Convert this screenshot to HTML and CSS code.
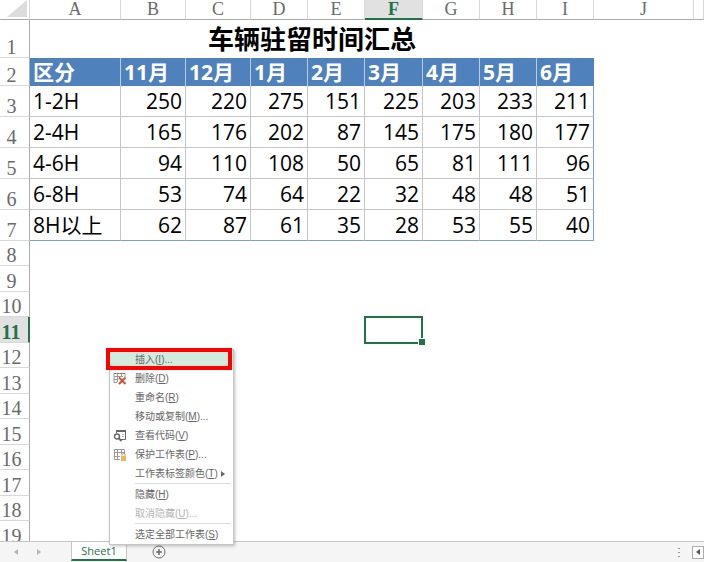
FILE: index.html
```html
<!DOCTYPE html>
<html lang="zh-CN">
<head>
    <meta charset="UTF-8">
    <meta name="viewport" content="width=device-width, initial-scale=1.0">
    <title>车辆驻留时间汇总</title>
    <link rel="stylesheet" href="styles.css">
</head>
<body>
    <main class="grid-area">
        <table class="sheet">
            <colgroup>
                <col class="col-gutter">
                <col class="col-a">
                <col class="col-wide"><col class="col-wide">
                <col class="col-month"><col class="col-month"><col class="col-active">
                <col class="col-month"><col class="col-month"><col class="col-month">
                <col class="col-j">
                <col>
            </colgroup>
            <thead>
                <tr>
                    <th class="corner"><svg width="20" height="17" viewBox="0 0 20 17"><path d="M20 0v17H0z" fill="#dcdcdc"/></svg></th>
                    <th>A</th><th>B</th><th>C</th><th>D</th><th>E</th><th class="active">F</th><th>G</th><th>H</th><th>I</th><th>J</th><th></th>
                </tr>
            </thead>
            <tbody>
                <tr class="title-row"><th>1</th><td class="title" colspan="9">车辆驻留时间汇总</td><td></td><td></td></tr>
                <tr class="head-row"><th>2</th><td>区分</td><td>11月</td><td>12月</td><td>1月</td><td>2月</td><td>3月</td><td>4月</td><td>5月</td><td>6月</td></tr>
                <tr class="data-row"><th>3</th><td>1-2H</td><td>250</td><td>220</td><td>275</td><td>151</td><td>225</td><td>203</td><td>233</td><td>211</td></tr>
                <tr class="data-row"><th>4</th><td>2-4H</td><td>165</td><td>176</td><td>202</td><td>87</td><td>145</td><td>175</td><td>180</td><td>177</td></tr>
                <tr class="data-row"><th>5</th><td>4-6H</td><td>94</td><td>110</td><td>108</td><td>50</td><td>65</td><td>81</td><td>111</td><td>96</td></tr>
                <tr class="data-row"><th>6</th><td>6-8H</td><td>53</td><td>74</td><td>64</td><td>22</td><td>32</td><td>48</td><td>48</td><td>51</td></tr>
                <tr class="data-row last"><th>7</th><td>8H以上</td><td>62</td><td>87</td><td>61</td><td>35</td><td>28</td><td>53</td><td>55</td><td>40</td></tr>
                <tr class="short"><th>8</th></tr>
                <tr><th>9</th></tr>
                <tr class="short"><th>10</th></tr>
                <tr><th class="active">11</th><td colspan="5"></td><td class="selected"></td></tr>
                <tr class="short"><th>12</th></tr>
                <tr><th>13</th></tr>
                <tr class="short"><th>14</th></tr>
                <tr><th>15</th></tr>
                <tr class="short"><th>16</th></tr>
                <tr><th>17</th></tr>
                <tr class="short"><th>18</th></tr>
                <tr><th>19</th></tr>
            </tbody>
        </table>
    </main>

    <footer class="tab-bar">
        <button class="nav" aria-label="上一个"><svg width="4" height="6" viewBox="0 0 4 6"><path d="M4 0v6L0 3z" fill="#b5b5b5"/></svg></button>
        <button class="nav" aria-label="下一个"><svg width="4" height="6" viewBox="0 0 4 6"><path d="M0 0v6l4-3z" fill="#b5b5b5"/></svg></button>
        <button class="tab">Sheet1</button>
        <button class="add" aria-label="新工作表"><svg width="14" height="14" viewBox="0 0 14 14" fill="none" stroke="#6a6a6a"><circle cx="7" cy="7" r="6"/><path d="M7 4v6M4 7h6" stroke-width="1.5"/></svg></button>
        <svg class="grip" width="2" height="9" viewBox="0 0 2 9" fill="#9a9a9a"><path d="M0 0h2v1H0zM0 4h2v1H0zM0 8h2v1H0z"/></svg>
        <button class="scroll" aria-label="向左滚动"><svg width="4" height="6" viewBox="0 0 4 6"><path d="M4 0v6L0 3z" fill="#555"/></svg></button>
    </footer>

    <div class="menu">
        <button class="item hover"><i></i><span>插入(<u>I</u>)...</span></button>
        <button class="item"><i><svg width="14" height="13" viewBox="0 0 14 13" fill="none"><path d="M1 10.500V1.500h11V5M1 4.500h9M1 7.500h4M4.500 2v8M8.500 2v3M1 10.500h3" stroke="#9a9a9a"/><path d="M1 1.500h11" stroke="#777" stroke-dasharray="2 1"/><path d="M6 5.500l6.500 6.500M12.500 5.500L6 12" stroke="#d2502f" stroke-width="2"/></svg></i><span>删除(<u>D</u>)</span></button>
        <button class="item"><i></i><span>重命名(<u>R</u>)</span></button>
        <button class="item"><i></i><span>移动或复制(<u>M</u>)...</span></button>
        <button class="item"><i><svg width="14" height="13" viewBox="0 0 14 13" fill="none" stroke="#666"><path d="M3.500 4V1.500h9v9H8"/><path d="M3 2h10" stroke-width="2"/><circle cx="4" cy="7.500" r="2.500" stroke-width="1.400"/><path d="M6 9.500L8.500 12" stroke-width="1.800"/><path d="M9 5.500h2M9 7.500h2" stroke="#bbb"/></svg></i><span>查看代码(<u>V</u>)</span></button>
        <button class="item"><i><svg width="14" height="13" viewBox="0 0 14 13" fill="none"><path d="M7 11.500H1.500v-10h10V6M1 4.500h11M1 8.500h6M4.500 1v10M8.500 1v5" stroke="#9a9a9a"/><path d="M8 8h5v5H8z" fill="#f0b45a"/><path d="M9 8V7q0-1.500 1.500-1.500T12 7v1" stroke="#e0a040"/></svg></i><span>保护工作表(<u>P</u>)...</span></button>
        <button class="item"><i></i><span>工作表标签颜色(<u>T</u>)</span><svg class="arrow" width="4" height="6" viewBox="0 0 4 6"><path d="M0 0v6l4-3z" fill="#666"/></svg></button>
        <hr>
        <button class="item"><i></i><span>隐藏(<u>H</u>)</span></button>
        <button class="item" disabled><i></i><span>取消隐藏(<u>U</u>)...</span></button>
        <hr>
        <button class="item"><i></i><span>选定全部工作表(<u>S</u>)</span></button>
    </div>
</body>
</html>
```
FILE: styles.css
```css
* {
    box-sizing: border-box;
}
body {
    margin: 0;
    height: 100vh;
    display: flex;
    flex-direction: column;
    background: #fff;
    font-family: "Open Sans", "Noto Sans CJK SC", sans-serif;
}
button {
    font: inherit;
    color: inherit;
    background: none;
    border: none;
    padding: 0;
}
.grid-area {
    flex: 1;
    min-height: 0;
    overflow: hidden;
}

/* sheet */
.sheet {
    width: 100%;
    table-layout: fixed;
    border-collapse: separate;
    border-spacing: 0;
}
.col-gutter { width: 30px; }
.col-a { width: 91px; }
.col-wide { width: 65px; }
.col-month { width: 57px; }
.col-active { width: 58px; }
.col-j { width: 100px; }

.sheet th,
.sheet td {
    padding: 0;
}
.sheet th {
    font-family: "Liberation Serif", serif;
    font-size: 20px;
    font-weight: normal;
    color: #6a6a6a;
}
.sheet thead th {
    height: 20px;
    font-size: 18px;
    line-height: 19px;
    border-right: 1px solid #d9d9d9;
    border-bottom: 1px solid #ababab;
}
.sheet thead .corner {
    text-align: right;
    padding-right: 2px;
    line-height: 0;
    vertical-align: top;
}
.sheet thead .active {
    color: #217346;
    background: #e1e1e1;
    border-bottom: 2px solid #217346;
    font-weight: bold;
    line-height: 18px;
}
.sheet tbody tr {
    height: 26px;
}
.sheet tbody .short {
    height: 25px;
}
.sheet tbody th {
    line-height: 20px;
    vertical-align: bottom;
    padding-right: 6px;
    border-right: 1px solid #ababab;
    border-bottom: 1px solid #d9d9d9;
}
.sheet tbody th.active {
    color: #217346;
    font-weight: bold;
    background: #e1e1e1;
    border-right: 2px solid #217346;
}
.sheet .title-row {
    height: 38px;
}
.title {
    font-size: 26px;
    line-height: 36px;
    font-weight: bold;
    text-align: center;
}
.sheet .head-row {
    height: 28px;
}
.head-row td {
    background: #4f81bd;
    color: #fff;
    font-size: 21px;
    line-height: 27px;
    font-weight: bold;
    border-right: 1px solid #b8cce4;
}
.sheet .head-row td {
    padding-left: 3px;
}
.head-row td:last-child {
    border-right-color: #4f81bd;
}
.sheet .data-row {
    height: 31px;
}
.data-row td {
    font-size: 21px;
    line-height: 30px;
    text-align: right;
    border-right: 1px solid #c6c6c6;
    border-bottom: 1px solid #c6c6c6;
}
.sheet .data-row td {
    padding: 0 3px;
}
.data-row td:nth-child(2) {
    text-align: left;
}
.data-row td:last-child {
    border-right-color: #7ba0cd;
}
.sheet .last td {
    border-bottom-color: #7ba0cd;
}

/* active cell */
.selected {
    position: relative;
}
.selected::before {
    content: "";
    position: absolute;
    inset: -1px 0 -1px -1px;
    border: 2px solid #217346;
}
.selected::after {
    content: "";
    position: absolute;
    right: -2px;
    bottom: -2px;
    width: 6px;
    height: 6px;
    background: #217346;
    border: solid #fff;
    border-width: 1px 0 0 1px;
}

/* tab bar */
.tab-bar {
    flex: none;
    display: flex;
    align-items: center;
    height: 21px;
    padding-left: 4px;
    background: #f5f5f5;
    border-top: 1px solid #c6c6c6;
    line-height: 0;
}
.nav {
    width: 23px;
}
.tab {
    align-self: flex-start;
    width: 56px;
    height: 19px;
    margin-left: 21px;
    font-size: 11px;
    line-height: 16px;
    color: #217346;
    background: #fff;
    border: solid #c6c6c6;
    border-width: 0 1px;
    border-bottom: 2px solid #217346;
}
.add {
    margin-left: 25px;
}
.grip {
    margin-left: auto;
    margin-right: 12px;
}
.scroll {
    display: flex;
    align-items: center;
    justify-content: center;
    width: 12px;
    height: 13px;
    background: #fff;
    border: 1px solid #ababab;
}

/* sheet tab context menu */
.menu {
    position: absolute;
    left: 109px;
    top: 349px;
    width: 125px;
    border: 1px solid #c6c6c6;
    background: #fff;
    box-shadow: 1px 1px 3px rgba(0, 0, 0, 0.25);
    font-family: "Liberation Sans", "Noto Sans CJK SC", sans-serif;
    font-size: 10px;
    color: #666;
}
.item {
    display: flex;
    align-items: center;
    width: 100%;
    height: 19px;
    line-height: 19px;
    white-space: nowrap;
    text-align: left;
}
.item i {
    display: flex;
    width: 25px;
    padding-left: 3px;
}
.item:disabled {
    color: #b5b5b5;
}
.hover {
    position: relative;
    background: #d3ebdd;
}
.hover::after {
    content: "";
    position: absolute;
    inset: -2px 1px -1px -4px;
    border: 4px solid #f00;
}
.arrow {
    margin-left: auto;
    margin-right: 8px;
}
.menu hr {
    height: 1px;
    margin: 0 2px 1px 25px;
    border: none;
    background: #dcdcdc;
}
```
